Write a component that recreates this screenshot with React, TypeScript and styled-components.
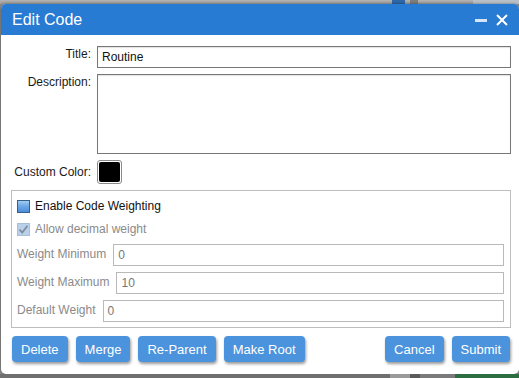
import React from "react";
import styled, { createGlobalStyle } from "styled-components";

const GlobalStyle = createGlobalStyle`
  html, body { margin: 0; padding: 0; }
  body {
    background: #8d8d8d;
    font-family: "Liberation Sans", Arial, sans-serif;
    font-size: 12px;
    color: #1a1a1a;
  }
  * { box-sizing: border-box; }
`;

const Page = styled.div`
  width: 519px;
  height: 378px;
  display: flex;
  flex-direction: column;
  overflow: hidden;
`;

const Strip = styled.div<{ $bg: string }>`
  height: 4px;
  flex: none;
  display: flex;
  background: ${(p) => p.$bg};
`;

const Seg = styled.div<{ $w: number; $bg: string }>`
  width: ${(p) => p.$w}px;
  flex: none;
  background: ${(p) => p.$bg};
`;

const Dialog = styled.div`
  flex: 1;
  margin-left: 1px;
  background: #fff;
  border-radius: 5px;
  overflow: hidden;
  display: flex;
  flex-direction: column;
  box-shadow: 0 0 3px rgba(0, 0, 0, 0.45);
`;

const TitleBar = styled.div`
  height: 31px;
  flex: none;
  background: #287bd3;
  display: flex;
  align-items: center;
  justify-content: space-between;
  padding: 0 11px 0 11px;
  color: #fff;
`;

const TitleText = styled.div`
  font-size: 16px;
  line-height: 18px;
  padding-top: 1px;
`;

const TitleIcons = styled.div`
  display: flex;
  align-items: center;
  gap: 9px;
`;

const Body = styled.div`
  flex: 1;
  padding: 11px 8px 0 10px;
  display: flex;
  flex-direction: column;
`;

const FormRow = styled.div<{ $align?: string; $mt?: number }>`
  display: grid;
  grid-template-columns: 80px 1fr;
  column-gap: 6px;
  align-items: ${(p) => p.$align || "start"};
  margin-top: ${(p) => p.$mt ?? 0}px;
`;

const Label = styled.label<{ $pt?: number }>`
  text-align: right;
  font-size: 12px;
  line-height: 14px;
  padding-top: ${(p) => p.$pt ?? 0}px;
  color: #1a1a1a;
  white-space: nowrap;
`;

const TextInput = styled.div<{ $light?: boolean }>`
  height: 22px;
  border: 1px solid ${(p) => (p.$light ? "#b9b9b9" : "#777")};
  box-shadow: ${(p) => (p.$light ? "none" : "inset 0 1px 1px rgba(0,0,0,0.12)")};
  background: #fff;
  padding: 0 4px;
  display: flex;
  align-items: center;
  font-size: 12px;
  color: ${(p) => (p.$light ? "#777" : "#111")};
`;

const TextArea = styled.div`
  height: 80px;
  border: 1px solid #777;
  box-shadow: inset 0 1px 1px rgba(0, 0, 0, 0.12);
  background: #fff;
`;

const Swatch = styled.div<{ $color: string }>`
  width: 25px;
  height: 24px;
  border: 1px solid #8a8a8a;
  border-radius: 3px;
  padding: 1px;
  background: #fff;
  &::after {
    content: "";
    display: block;
    width: 100%;
    height: 100%;
    border-radius: 2px;
    background: ${(p) => p.$color};
  }
`;

const Fieldset = styled.div`
  margin-top: 6px;
  border: 1px solid #bdbdbd;
  padding: 8px 6px 5px 5px;
  display: flex;
  flex-direction: column;
`;

const CheckRow = styled.div<{ $disabled?: boolean; $mt?: number }>`
  display: flex;
  align-items: center;
  gap: 5px;
  height: 14px;
  margin-top: ${(p) => p.$mt ?? 0}px;
  font-size: 12px;
  color: ${(p) => (p.$disabled ? "#8a8a8a" : "#111")};
`;

const Box = styled.div<{ $disabled?: boolean }>`
  width: 13px;
  height: 13px;
  flex: none;
  border: 1px solid ${(p) => (p.$disabled ? "#a9bfd6" : "#3a5f86")};
  background: ${(p) =>
    p.$disabled
      ? "#b8d0ea"
      : "linear-gradient(#a3ccf3 0%, #6fa9e6 45%, #4a8fdb 100%)"};
  display: flex;
  align-items: center;
  justify-content: center;
`;

const InlineRow = styled.div<{ $mt?: number }>`
  display: flex;
  align-items: flex-start;
  gap: 7px;
  margin-top: ${(p) => p.$mt ?? 0}px;
`;

const InlineLabel = styled.span`
  font-size: 12px;
  line-height: 14px;
  padding-top: 3px;
  color: #8a8a8a;
  white-space: nowrap;
`;

const Grow = styled.div`
  flex: 1;
`;

const ButtonBar = styled.div`
  margin-top: 8px;
  margin-left: 1px;
  margin-right: 1px;
  display: flex;
  gap: 8px;
`;

const Button = styled.button<{ $push?: boolean }>`
  height: 26px;
  padding: 0 9px;
  border: none;
  border-radius: 4px;
  background: #4b93dc;
  color: #fff;
  font-family: "Liberation Sans", Arial, sans-serif;
  font-size: 13px;
  box-shadow: 1px 2px 3px rgba(0, 0, 0, 0.4);
  margin-left: ${(p) => (p.$push ? "auto" : "0")};
  cursor: pointer;
`;

export default function App() {
  return (
    <>
      <GlobalStyle />
      <Page>
        <Strip $bg="linear-gradient(#b4b4b4, #9c9c9c)">
          <Seg $w={392} $bg="transparent" />
          <Seg $w={13} $bg="#2f68a8" />
          <Seg $w={5} $bg="transparent" />
          <Seg $w={8} $bg="#7d7d7d" />
          <Seg $w={55} $bg="transparent" />
          <Seg $w={46} $bg="#b9c0c8" />
        </Strip>
        <Dialog>
          <TitleBar>
            <TitleText>Edit Code</TitleText>
            <TitleIcons>
              <svg width="12" height="12" viewBox="0 0 12 12">
                <rect x="0" y="5" width="12" height="3" fill="#d6e6f8" />
              </svg>
              <svg width="12" height="12" viewBox="0 0 12 12">
                <path d="M1 1 L11 11 M11 1 L1 11" stroke="#fff" strokeWidth="2" />
              </svg>
            </TitleIcons>
          </TitleBar>
          <Body>
            <FormRow>
              <Label $pt={1}>Title:</Label>
              <TextInput>Routine</TextInput>
            </FormRow>
            <FormRow $mt={6}>
              <Label $pt={1}>Description:</Label>
              <TextArea />
            </FormRow>
            <FormRow $mt={6} $align="center">
              <Label>Custom Color:</Label>
              <Swatch $color="#000" />
            </FormRow>
            <Fieldset>
              <CheckRow>
                <Box />
                <span>Enable Code Weighting</span>
              </CheckRow>
              <CheckRow $disabled $mt={9}>
                <Box $disabled>
                  <svg width="11" height="11" viewBox="0 0 11 11">
                    <path d="M1.5 5.5 L4.2 8.5 L9.5 1.8" stroke="#7e8c9b" strokeWidth="1.8" fill="none" />
                  </svg>
                </Box>
                <span>Allow decimal weight</span>
              </CheckRow>
              <InlineRow $mt={8}>
                <InlineLabel>Weight Minimum</InlineLabel>
                <Grow>
                  <TextInput $light>0</TextInput>
                </Grow>
              </InlineRow>
              <InlineRow $mt={6}>
                <InlineLabel>Weight Maximum</InlineLabel>
                <Grow>
                  <TextInput $light>10</TextInput>
                </Grow>
              </InlineRow>
              <InlineRow $mt={6}>
                <InlineLabel>Default Weight</InlineLabel>
                <Grow>
                  <TextInput $light>0</TextInput>
                </Grow>
              </InlineRow>
            </Fieldset>
            <ButtonBar>
              <Button>Delete</Button>
              <Button>Merge</Button>
              <Button>Re-Parent</Button>
              <Button>Make Root</Button>
              <Button $push>Cancel</Button>
              <Button>Submit</Button>
            </ButtonBar>
          </Body>
        </Dialog>
        <Strip $bg="#6f6f6f">
          <Seg $w={390} $bg="transparent" />
          <Seg $w={20} $bg="#9a9a9a" />
          <Seg $w={10} $bg="#5a5a5a" />
          <Seg $w={35} $bg="#7a7a7a" />
          <Seg $w={64} $bg="#2d6d42" />
        </Strip>
      </Page>
    </>
  );
}
